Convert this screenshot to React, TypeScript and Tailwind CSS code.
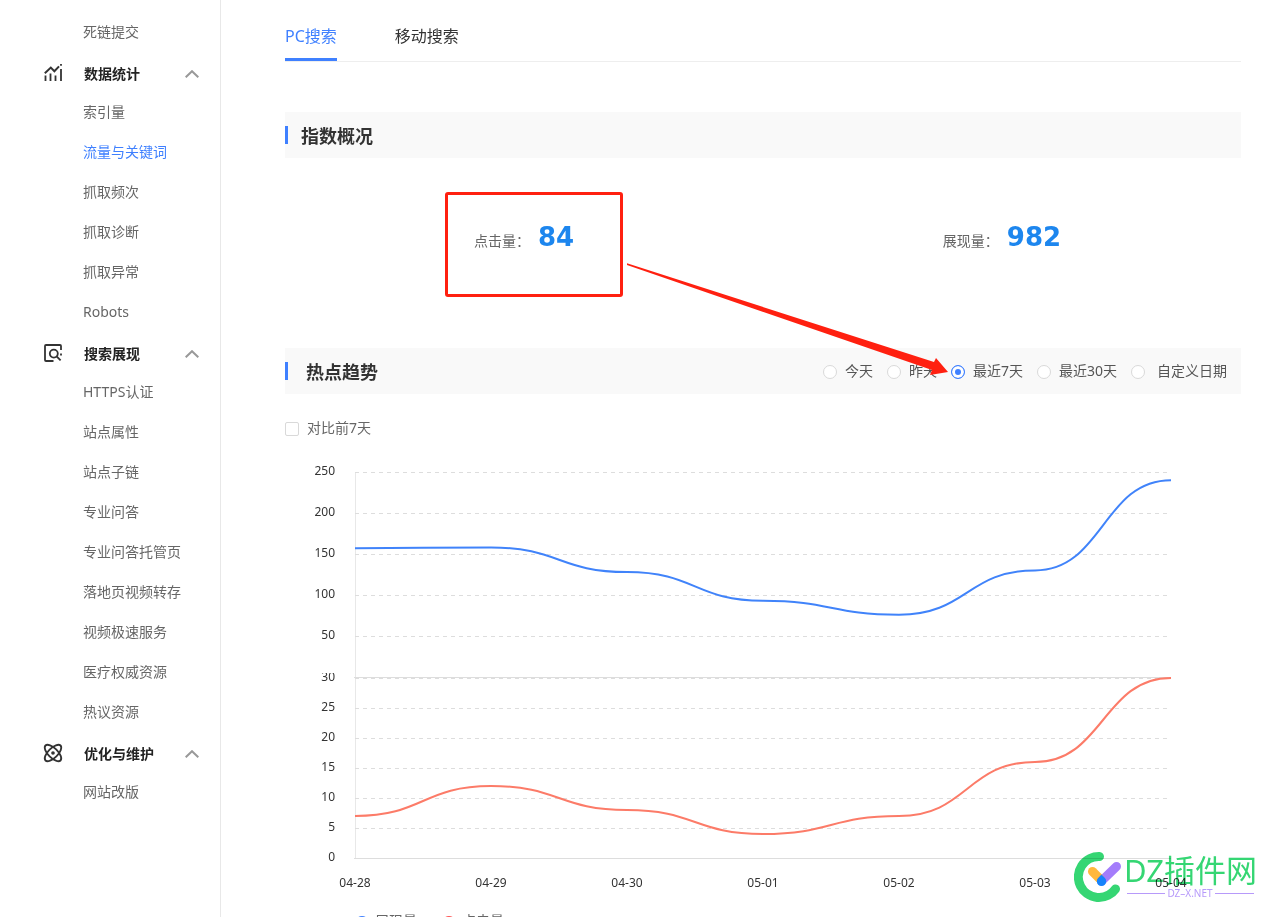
import React, { useState } from 'react';
import { Atom } from 'lucide-react';

interface MenuGroup {
  title?: string;
  icon?: React.ReactNode;
  items: string[];
}

const StatsIcon = () => (
  <svg className="h-[18px] w-[18px]" viewBox="0 0 18 18" fill="none" stroke="currentColor" strokeWidth={1.8} aria-hidden="true">
    <path d="M1.5 11.5V17M6.5 9.5V17M11.5 11.5V17M17 5V17M17 0v1.8" />
    <path d="M.8 9.2L6.8 3.6l3.6 3.6L15 2.4" strokeWidth={2} />
  </svg>
);

const DisplayIcon = () => (
  <svg className="h-[18px] w-[18px]" viewBox="0 0 18 18" fill="none" stroke="currentColor" strokeWidth={1.8} aria-hidden="true">
    <path d="M9.5 17H2a1 1 0 0 1-1-1V2a1 1 0 0 1 1-1h14a1 1 0 0 1 1 1v4M17 9.4v2" />
    <circle cx="9.8" cy="9.6" r="4" />
    <path d="M12.6 12.4l4 4" />
  </svg>
);

const groups: MenuGroup[] = [
  { items: ['死链提交'] },
  {
    title: '数据统计',
    icon: <StatsIcon />,
    items: ['索引量', '流量与关键词', '抓取频次', '抓取诊断', '抓取异常', 'Robots'],
  },
  {
    title: '搜索展现',
    icon: <DisplayIcon />,
    items: [
      'HTTPS认证',
      '站点属性',
      '站点子链',
      '专业问答',
      '专业问答托管页',
      '落地页视频转存',
      '视频极速服务',
      '医疗权威资源',
      '热议资源',
    ],
  },
  {
    title: '优化与维护',
    icon: <Atom size={22} strokeWidth={2} className="shrink-0" />,
    items: ['网站改版'],
  },
];

const ranges = ['今天', '昨天', '最近7天', '最近30天', '自定义日期'];

const dates = ['04-28', '04-29', '04-30', '05-01', '05-02', '05-03', '05-04'];
const views = [157, 158, 128, 93, 76, 130, 240];
const clicks = [7, 12, 8, 4, 7, 16, 30];

const LEFT = 70;
const STEP = 136;
const RIGHT = LEFT + STEP * 6;

// flat tangent at every point
function smoothPath(values: number[], base: number, scale: number) {
  return values
    .map((v, i) => {
      const x = LEFT + i * STEP;
      const y = base - v * scale;
      if (i === 0) return `M${x} ${y}`;
      const prevY = base - values[i - 1] * scale;
      return `C${x - STEP / 2} ${prevY} ${x - STEP / 2} ${y} ${x} ${y}`;
    })
    .join('');
}

function Sidebar() {
  return (
    <nav className="w-[221px] shrink-0 border-r border-[#e8e8e8] pt-3 text-sm">
      {groups.map((group, i) => (
        <div key={i}>
          {group.title && (
            <button type="button" className="flex h-10 w-full items-center pt-1 pr-[21px] pl-[42px] font-bold text-[#222]">
              <span className="flex w-[22px] justify-center pb-0.5 text-[#333]">{group.icon}</span>
              <span className="ml-5 flex-1 text-left">{group.title}</span>
              <svg className="h-2 w-3.5" viewBox="0 0 14 8" fill="none" stroke="#999" strokeWidth={2} aria-hidden="true">
                <path d="M.7 7.3L7 1.2l6.3 6.1" />
              </svg>
            </button>
          )}
          <ul>
            {group.items.map((item) => (
              <li key={item}>
                <a
                  href="#"
                  className={`flex h-10 items-center pl-[83px] ${item === '流量与关键词' ? 'text-[#3f80ff]' : 'text-[#666]'}`}
                >
                  {item}
                </a>
              </li>
            ))}
          </ul>
        </div>
      ))}
    </nav>
  );
}

function Tabs() {
  const [active, setActive] = useState('PC搜索');
  return (
    <div className="flex h-[62px] gap-[58px] border-b border-[#eee]">
      {['PC搜索', '移动搜索'].map((tab) => (
        <button
          key={tab}
          type="button"
          onClick={() => setActive(tab)}
          className={`h-[61px] border-b-[3px] pt-3.5 ${
            active === tab ? 'border-[#3f80ff] text-[#3f80ff]' : 'border-transparent text-[#333]'
          }`}
        >
          {tab}
        </button>
      ))}
    </div>
  );
}

function Stat({ label, value }: { label: string; value: number }) {
  return (
    <div className="flex items-baseline justify-center">
      <span className="text-sm text-[#666]">{label}：</span>
      <strong className="ml-2 font-['DejaVu_Sans',sans-serif] text-[26px] leading-10 font-bold text-[#1d86ee]">{value}</strong>
    </div>
  );
}

function RangePicker() {
  return (
    <div className="flex gap-[14px] pr-[14px] text-sm text-[#555]">
      {ranges.map((range) => (
        <label key={range} className="flex items-center gap-2 last:gap-3">
          <input
            type="radio"
            name="range"
            defaultChecked={range === '最近7天'}
            className="mt-0.5 h-3.5 w-3.5 appearance-none rounded-full border border-[#d9d9d9] bg-white checked:border-[#3f80ff] checked:bg-[#3f80ff] checked:shadow-[inset_0_0_0_3px_white]"
          />
          {range}
        </label>
      ))}
    </div>
  );
}

function TrendChart() {
  return (
    <svg className="block w-full" viewBox="0 0 956 450" role="img" aria-label="热点趋势" fontSize={12} fill="#333">
      <path d="M70.5 22V409" stroke="#e8e8e8" />
      <g textAnchor="end">
        {[250, 200, 150, 100, 50].map((v, i) => (
          <g key={v}>
            <path d={`M${LEFT} ${22.5 + i * 41}H${RIGHT}`} stroke="#ddd" strokeDasharray="4 4" />
            <text x={50} y={25 + i * 41}>{v}</text>
          </g>
        ))}
        <path d={`M69 227.5H${RIGHT}`} stroke="#ddd" />
        {[25, 20, 15, 10, 5].map((v, i) => (
          <g key={v}>
            <path d={`M${LEFT} ${258.5 + i * 30}H${RIGHT}`} stroke="#ddd" strokeDasharray="4 4" />
            <text x={50} y={261 + i * 30}>{v}</text>
          </g>
        ))}
        <path d={`M${LEFT} 228.5H${RIGHT}`} stroke="#ddd" strokeDasharray="4 4" />
        <text x={50} y={231}>30</text>
        {/* lower grid cuts off the top of its first tick */}
        <rect x={30} y={220} width={24} height={3} fill="#fff" />
        <path d={`M69 408.5H${RIGHT}`} stroke="#ddd" />
        <text x={50} y={411}>0</text>
      </g>
      <g textAnchor="middle">
        {dates.map((d, i) => (
          <text key={d} x={LEFT + i * STEP} y={437}>{d}</text>
        ))}
      </g>
      <g fill="none" strokeWidth={2}>
        <path d={smoothPath(views, 227, 0.82)} stroke="#4083fa" />
        <path d={smoothPath(clicks, 408, 6)} stroke="#fc7b68" />
      </g>
    </svg>
  );
}

function Legend() {
  return (
    <ul className="mt-[11px] flex gap-[25px] pl-[70px] text-sm text-[#666]">
      <li className="flex gap-[6px]">
        <span className="mt-[5px] h-3.5 w-3.5 rounded-full bg-[#3f80ff]" />
        展现量
      </li>
      <li className="flex gap-[6px]">
        <span className="mt-[5px] h-3.5 w-3.5 rounded-full bg-[#ff5555]" />
        点击量
      </li>
    </ul>
  );
}

function Watermark() {
  return (
    <svg
      className="absolute right-4 bottom-[13px] h-[56px] w-[184px] mix-blend-multiply"
      viewBox="0 0 184 56"
      fill="none"
      strokeLinecap="round"
      aria-hidden="true"
    >
      <path d="M25.5 8.5A20.5 20.5 0 1 0 41.5 41" stroke="#35d673" strokeWidth={9} />
      <path d="M27.5 33L42.5 18.5" stroke="#a47dfb" strokeWidth={9} />
      <path d="M18.5 23.5L25 30" stroke="#ffb83c" strokeWidth={9} />
      <path d="M27.5 26.5l3.4 3.6a4.7 4.7 0 1 1-6.8 0z" fill="#1683fb" />
      <text x={50} y={34} fontSize={31} fill="#35d673">DZ插件网</text>
      <path d="M53 45.5h38M141 45.5h39" stroke="#b79afa" strokeLinecap="butt" />
      <text x={116} y={49} fontSize={10} textAnchor="middle" fill="#b79afa">DZ–X.NET</text>
    </svg>
  );
}

export default function App() {
  return (
    <div className="relative flex h-screen overflow-hidden bg-white font-['Noto_Sans','Noto_Sans_CJK_SC',sans-serif]">
      <Sidebar />
      <main className="min-w-0 flex-1 pr-[33px] pl-16">
        <Tabs />
        <div className="relative mt-[50px]">
          <section>
            <div className="flex h-[46px] items-center bg-[#f9f9f9]">
              <span className="h-[18px] w-[3px] bg-[#3f80ff]" />
              <h2 className="ml-[13px] pt-0.5 text-lg font-bold text-[#333]">指数概况</h2>
            </div>
            <div className="grid h-[190px] grid-cols-2 pt-[59px]">
              <Stat label="点击量" value={84} />
              <Stat label="展现量" value={982} />
            </div>
          </section>
          <section>
            <div className="flex h-[46px] items-center bg-[#f9f9f9]">
              <span className="h-[18px] w-[3px] bg-[#3f80ff]" />
              <h2 className="ml-[18px] flex-1 pt-0.5 text-lg font-bold text-[#333]">热点趋势</h2>
              <RangePicker />
            </div>
            <label className="mt-6 flex h-5 items-center gap-2 text-sm text-[#666]">
              <input
                type="checkbox"
                className="mt-0.5 h-3.5 w-3.5 appearance-none rounded-[2px] border border-[#d9d9d9] bg-white checked:bg-[#3f80ff]"
              />
              对比前7天
            </label>
            <div className="mt-3">
              <TrendChart />
              <Legend />
            </div>
          </section>
          <div className="pointer-events-none absolute top-[80px] left-[160px] h-[105px] w-[178px] rounded-[3px] border-[3px] border-[#ff2010]" />
          <svg
            className="pointer-events-none absolute top-[150px] left-[340px] h-[115px] w-[326px]"
            viewBox="0 0 326 115"
            fill="#ff2010"
            aria-hidden="true"
          >
            <path d="M2 1.2L309 100l2-4 12 14-18 3 2-5L2 3z" />
          </svg>
        </div>
      </main>
      <Watermark />
    </div>
  );
}
